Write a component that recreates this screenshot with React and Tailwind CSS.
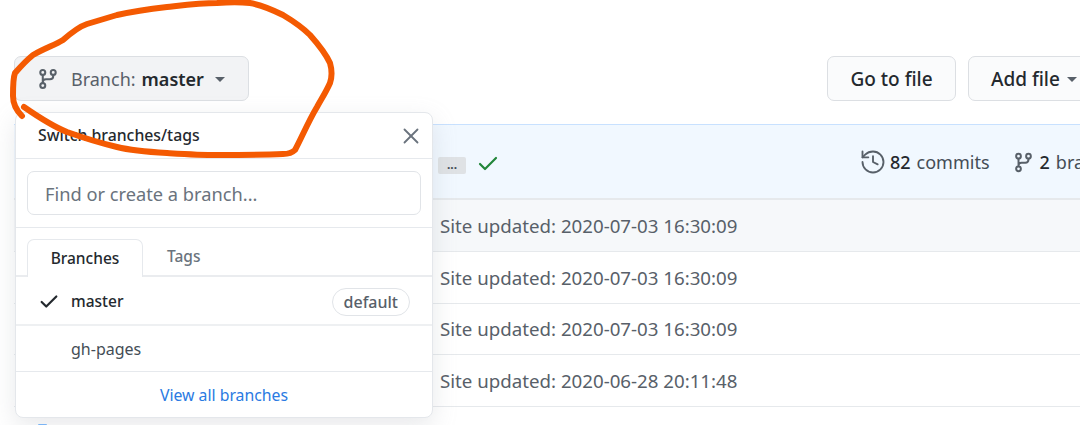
import { Check, History, X } from 'lucide-react';

const FONT = 'font-["Noto_Sans",sans-serif]';

const rows = [
  { msg: 'Site updated: 2020-07-03 16:30:09', bg: 'bg-[#f6f8fa]' },
  { msg: 'Site updated: 2020-07-03 16:30:09', bg: 'bg-white' },
  { msg: 'Site updated: 2020-07-03 16:30:09', bg: 'bg-white' },
  { msg: 'Site updated: 2020-06-28 20:11:48', bg: 'bg-white' },
];

function Branch({ size = 20 }) {
  return (
    <svg className="shrink-0" width={size} height={size} viewBox="0 0 16 16" fill="none" stroke="#586069" strokeWidth="1.5">
      <circle cx="4.2" cy="3.2" r="1.8" />
      <circle cx="4.2" cy="12.8" r="1.8" />
      <circle cx="11.8" cy="3.2" r="1.8" />
      <path d="M4.2 5v6M11.8 5v.8c0 1.6-1 2.4-2.4 2.4H6.5c-1.3 0-2.3.6-2.3 2" />
    </svg>
  );
}

function Caret({ className }) {
  return <span className={`shrink-0 w-0 h-0 border-x-[5px] border-x-transparent border-t-[5px] border-t-[#586069] ${className}`} />;
}

function BranchMenu() {
  return (
    <div className="absolute left-[15px] top-[112px] w-[418px] h-[306px] bg-white border border-[#e4e7eb] rounded-[8px] shadow-[0_8px_24px_rgba(149,157,165,0.22)] flex flex-col">
      <div className="h-[46px] shrink-0 flex items-center justify-between pt-[1px] pl-[22px] pr-[8px] border-b border-[#e6e9ed]">
        <span className="text-[15.8px] font-medium text-[#24292e]">Switch branches/tags</span>
        <X size={26} color="#6a737d" strokeWidth={1.7} className="-mt-[1px]" />
      </div>
      <div className="h-[69px] shrink-0 flex items-center pl-[11px] pr-[11px] border-b border-[#e6e9ed]">
        <div className="w-full h-[44px] border border-[#e1e4e8] rounded-[7px] pt-[1px] pl-[17px] flex items-center text-[18.25px] text-[#6a737d]">
          Find or create a branch...
        </div>
      </div>
      <div className="h-[49px] shrink-0 flex items-end pl-[11px] border-b-2 border-[#eaecef]">
        <div className="w-[116px] h-[38px] -mb-[2px] pt-[1px] bg-white border border-b-0 border-[#e6e9ed] rounded-t-[7px] flex items-center justify-center text-[15.5px] font-medium text-[#24292e]">
          Branches
        </div>
        <div className="ml-[24px] h-[36px] flex items-center text-[15.5px] font-medium text-[#6a737d]">Tags</div>
      </div>
      <div className="h-[49px] shrink-0 flex items-center pt-[2px] pl-[22px] pr-[22px] border-b-2 border-[#eef0f2]">
        <Check size={22} color="#24292e" strokeWidth={2.4} />
        <span className="ml-[11px] text-[15.5px] font-medium text-[#24292e]">master</span>
        <span className="ml-auto h-[28px] px-[11px] flex items-center border border-[#e1e4e8] rounded-full text-[16px] font-medium text-[#586069]">default</span>
      </div>
      <div className="h-[46px] shrink-0 flex items-center pt-[1px] pl-[55px] border-b border-[#e6e9ed] text-[16px] text-[#444d56]">gh-pages</div>
      <div className="flex-1 flex items-center justify-center pt-[2px] text-[15.8px] text-[#2a7ae2]">View all branches</div>
    </div>
  );
}

export default function App() {
  return (
    <div className={`relative w-[1080px] h-[425px] overflow-hidden bg-white ${FONT}`}>
      <div className="pt-[56px] pl-[14px] flex items-start">
        <div className="w-[235px] h-[45px] shrink-0 pt-[1px] bg-[#f2f3f5] border border-[#dcdfe3] rounded-[7px] flex items-center pl-[22px]">
          <Branch size={22} />
          <span className="ml-[12px] text-[18px] text-[#586069]">Branch:</span>
          <span className="ml-[6px] text-[18px] font-semibold text-[#24292e]">master</span>
          <Caret className="ml-[11px]" />
        </div>
        <div className="ml-[578px] w-[129px] h-[45px] shrink-0 pt-[1px] bg-[#fafbfc] border border-[#dcdfe3] rounded-[7px] flex items-center justify-center text-[19px] font-medium text-[#24292e]">
          Go to file
        </div>
        <div className="ml-[12px] w-[130px] h-[45px] shrink-0 pt-[1px] bg-[#fafbfc] border border-[#dcdfe3] rounded-l-[7px] flex items-center pl-[22px] text-[19px] font-medium text-[#24292e]">
          Add file
          <Caret className="ml-[7px]" />
        </div>
      </div>

      <div className="mt-[23px] ml-[14px] w-[1100px] border-t border-[#c8e1ff]">
        <div className="h-[75px] pt-[1px] bg-[#f1f8ff] border-b-2 border-[#e6e9ec] flex items-center pl-[424px] whitespace-nowrap">
          <span className="mt-[6px] w-[28px] h-[17px] shrink-0 rounded-[2px] bg-[#dfe2e5] flex items-center justify-center text-[12px] leading-none font-bold text-[#444d56]">...</span>
          <Check size={24} color="#22863a" strokeWidth={2.2} className="ml-[10px] mt-[3px] shrink-0" />
          <History size={28} color="#586069" strokeWidth={1.6} className="ml-[359px] shrink-0" />
          <span className="ml-[3px] text-[18px] font-medium text-[#24292e]">82</span>
          <span className="ml-[6px] text-[18px] text-[#444d56]">commits</span>
          <span className="ml-[23px]"><Branch size={21} /></span>
          <span className="ml-[6px] text-[18px] font-medium text-[#24292e]">2</span>
          <span className="ml-[6px] text-[18px] text-[#444d56]">branches</span>
        </div>
        {rows.map((row, i) => (
          <div key={i} className={`h-[51.75px] ${row.bg} border-b border-[#e6e9ec] flex items-center pt-[1px] pl-[426px] text-[18.7px] text-[#586069]`}>
            {row.msg}
          </div>
        ))}
        <div className="pl-[24px] pt-[17px]">
          <div className="w-[9px] h-[2px] rounded-t-[1px] bg-[#79b8ff]" />
        </div>
      </div>

      <BranchMenu />

      <svg className="absolute inset-0 pointer-events-none" width="1080" height="425" fill="none">
        <path
          d="M22 116 C16 110 13 104 13 96 C13 86 13 78 15 73 C22 65 28 59 33 55 C45 48 55 45 63 40 C71 33 78 27 87 24 C97 21 107 18 117 15 C135 11 150 9 167 7 C185 5 200 3 217 3 C230 2 240 2 250 3 C262 5 273 10 283 15 C293 21 302 27 310 35 C318 44 325 52 330 63 C332 70 332 77 330 83 C326 92 322 98 317 107 C308 122 302 137 295 150 C292 153 288 154 283 154 C260 155 240 155 217 155 C200 155 184 154 167 153 C150 152 133 151 117 147 C100 143 84 138 67 132 C52 126 37 116 24 107"
          stroke="#f45a02"
          strokeWidth="6"
          strokeLinecap="round"
          strokeLinejoin="round"
        />
      </svg>
    </div>
  );
}
